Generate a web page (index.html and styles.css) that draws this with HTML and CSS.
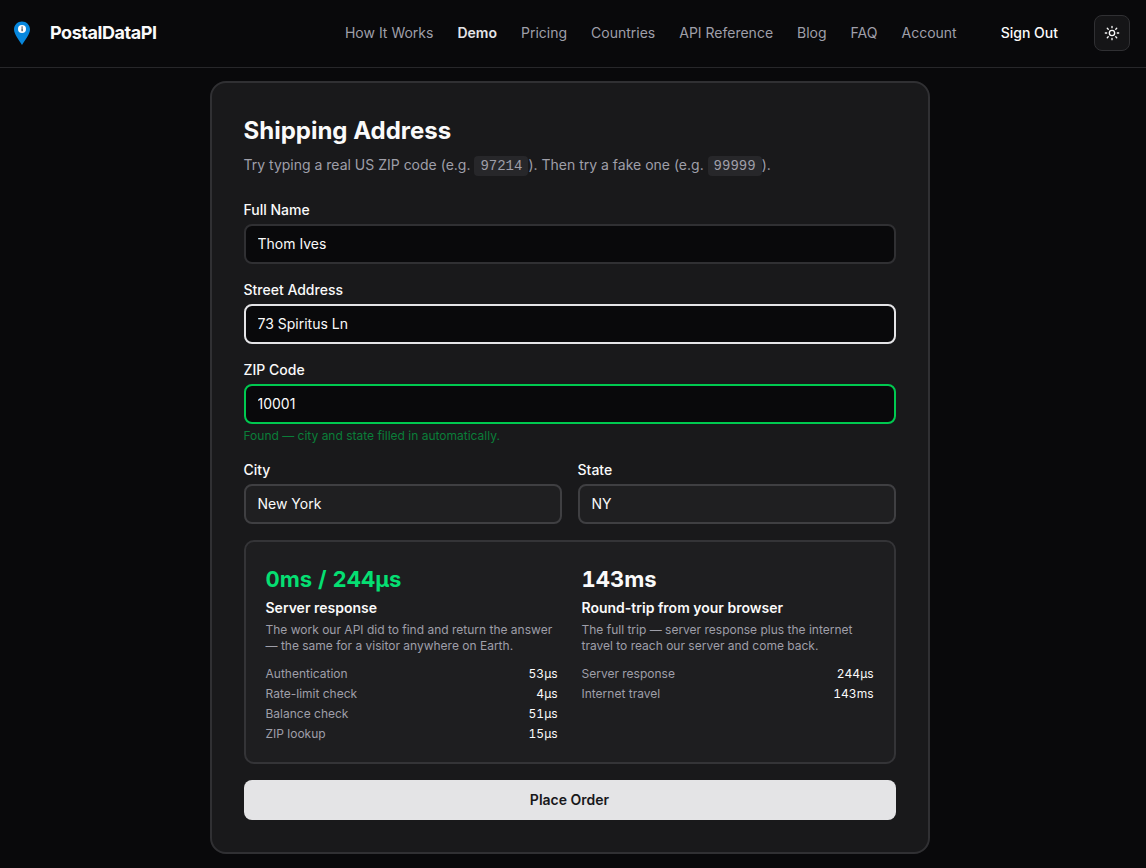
FILE: index.html
```html
<!DOCTYPE html>
<html lang="en">
<head>
<meta charset="utf-8">
<meta name="viewport" content="width=device-width, initial-scale=1">
<title>Demo – PostalDataPI</title>
<link rel="stylesheet" href="styles.css">
</head>
<body>
<header class="header">
  <a class="brand" href="#">
    <svg class="brand-pin" viewBox="0 0 16 24" aria-hidden="true">
      <path d="M8 0.5C3.6 0.5 0 4 0 8.3C0 13.4 4.8 18.6 8 24C11.2 18.6 16 13.4 16 8.3C16 4 12.4 0.5 8 0.5Z" fill="#0787dd"/>
      <circle cx="8" cy="8" r="4" fill="#fff"/>
      <path d="M7.5 5.5h1.2v1.2H7.5zM7.5 7.3h1.2v3H7.5z" fill="#2c3e4c"/>
    </svg>
    <span class="brand-name">PostalDataPI</span>
  </a>
  <div class="header-end">
    <nav class="nav" aria-label="Main">
      <a href="#">How It Works</a>
      <a class="active" href="#" aria-current="page">Demo</a>
      <a href="#">Pricing</a>
      <a href="#">Countries</a>
      <a href="#">API Reference</a>
      <a href="#">Blog</a>
      <a href="#">FAQ</a>
      <a href="#">Account</a>
    </nav>
    <button class="sign-out" type="button">Sign Out</button>
    <button class="theme" type="button" aria-label="Toggle theme">
      <svg viewBox="0 0 24 24" aria-hidden="true"><circle cx="12" cy="12" r="4"/><path d="M12 2v2M12 20v2M4.93 4.93l1.41 1.41M17.66 17.66l1.41 1.41M2 12h2M20 12h2M6.34 17.66l-1.41 1.41M19.07 4.93l-1.41 1.41"/></svg>
    </button>
  </div>
</header>
<main class="main">
  <form class="card">
    <div class="intro">
      <h1>Shipping Address</h1>
      <p>Try typing a real US ZIP code (e.g. <code>97214</code>). Then try a fake one (e.g. <code>99999</code>).</p>
    </div>
    <div class="field">
      <label for="name">Full Name</label>
      <input id="name" type="text" value="Thom Ives">
    </div>
    <div class="field">
      <label for="street">Street Address</label>
      <input id="street" class="focused" type="text" value="73 Spiritus Ln">
    </div>
    <div class="field">
      <label for="zip">ZIP Code</label>
      <input id="zip" class="valid" type="text" value="10001" aria-describedby="zip-hint">
      <p id="zip-hint" class="hint">Found — city and state filled in automatically.</p>
    </div>
    <div class="pair">
      <div class="field">
        <label for="city">City</label>
        <input id="city" class="filled" type="text" value="New York">
      </div>
      <div class="field">
        <label for="state">State</label>
        <input id="state" class="filled" type="text" value="NY">
      </div>
    </div>
    <div class="stats">
      <section class="stat">
        <p class="figure figure-good">0ms / 244µs</p>
        <h2>Server response</h2>
        <p class="note">The work our API did to find and return the answer — the same for a visitor anywhere on Earth.</p>
        <dl>
          <div><dt>Authentication</dt><dd>53µs</dd></div>
          <div><dt>Rate-limit check</dt><dd>4µs</dd></div>
          <div><dt>Balance check</dt><dd>51µs</dd></div>
          <div><dt>ZIP lookup</dt><dd>15µs</dd></div>
        </dl>
      </section>
      <section class="stat">
        <p class="figure">143ms</p>
        <h2>Round-trip from your browser</h2>
        <p class="note">The full trip — server response plus the internet travel to reach our server and come back.</p>
        <dl>
          <div><dt>Server response</dt><dd>244µs</dd></div>
          <div><dt>Internet travel</dt><dd>143ms</dd></div>
        </dl>
      </section>
    </div>
    <button class="submit" type="button">Place Order</button>
  </form>
</main>
</body>
</html>
```
FILE: styles.css
```css
* { box-sizing: border-box; }
body, h1, h2, p, dl, dd { margin: 0; }
body {
  background: #09090b;
  color: #fafafa;
  font: 14px/20px Inter, "Liberation Sans", sans-serif;
}
button, input { font: inherit; }
button { cursor: pointer; }
a { color: inherit; text-decoration: none; }

.header {
  display: flex;
  align-items: center;
  justify-content: space-between;
  padding: 15px 16px 16px 14px;
  border-bottom: 1px solid #27272a;
}
.brand { display: flex; align-items: center; gap: 20px; }
.brand-pin { width: 16px; height: 24px; }
.brand-name { font-size: 18px; line-height: 28px; font-weight: 700; letter-spacing: -0.025em; }
.header-end { display: flex; align-items: center; }
.nav { display: flex; gap: 24px; color: #9f9fa9; }
.nav .active { color: #e4e4e7; font-weight: 600; }
.sign-out {
  margin: 0 24px 0 32px;
  padding: 8px 12px;
  border: 0;
  background: none;
  color: #fafafa;
  font-weight: 500;
}
.theme {
  display: grid;
  place-items: center;
  width: 36px;
  height: 36px;
  padding: 0;
  border: 1px solid #303033;
  border-radius: 8px;
  background: #151517;
  color: #fafafa;
}
.theme svg {
  width: 16px;
  height: 16px;
  fill: none;
  stroke: currentColor;
  stroke-width: 2;
  stroke-linecap: round;
}

.main { padding: 13px 7px 14px 0; }
.card {
  display: grid;
  gap: 16px;
  max-width: 720px;
  margin: 0 auto;
  padding: 32px;
  border: 2px solid #303033;
  border-radius: 16px;
  background: #19191b;
}
.intro { margin-bottom: 8px; }
.intro h1 { font-size: 24px; line-height: 32px; font-weight: 700; }
.intro p { margin-top: 8px; color: #9f9fa9; }
.intro code {
  padding: 2px 6px;
  border-radius: 4px;
  background: #27272a;
  font-family: "Liberation Mono", monospace;
  font-size: 14px;
}
.field label { display: block; margin-bottom: 4px; font-weight: 500; }
.field input {
  display: block;
  width: 100%;
  height: 40px;
  padding: 0 12px 2px;
  border: 2px solid #303033;
  border-radius: 8px;
  outline: 0;
  background: #09090b;
  color: #fafafa;
}
.field .focused { border-color: #e4e4e7; }
.field .valid { border-color: #00c950; }
.field .filled { border-color: #3f3f42; background: #1f1f21; }
.hint { margin-top: 4px; color: #0a7e39; font-size: 12px; line-height: 16px; }
.pair, .stats { display: grid; grid-template-columns: 1fr 1fr; }
.pair { gap: 16px; }
.stats {
  gap: 24px;
  padding: 20px;
  border: 2px solid #343437;
  border-radius: 10px;
  background: #1e1e20;
}
.figure { font-size: 22px; line-height: 34px; font-weight: 700; font-variant-numeric: tabular-nums; }
.figure-good { color: #05df72; }
.stat h2 { margin-top: 2px; font-size: 14px; line-height: 20px; font-weight: 600; }
.note { margin-top: 4px; color: #9f9fa9; font-size: 12px; line-height: 16px; }
.stat dl { display: grid; gap: 4px; margin-top: 12px; font-size: 12px; line-height: 16px; }
.stat dl div { display: flex; justify-content: space-between; }
.stat dt { color: #9f9fa9; }
.stat dd { font-variant-numeric: tabular-nums; }
.submit {
  height: 40px;
  border: 0;
  border-radius: 8px;
  background: #e4e4e6;
  color: #18181b;
  font-weight: 600;
}
```
